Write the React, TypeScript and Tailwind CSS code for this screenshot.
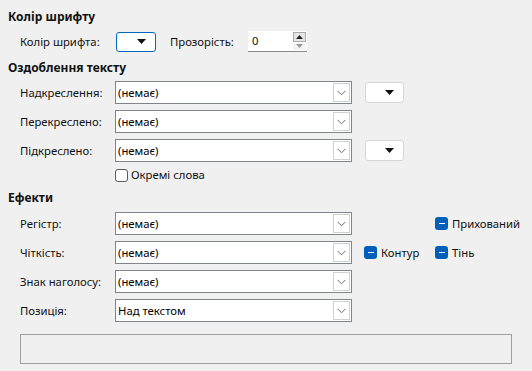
import React from "react"

const Chevron = () => (
  <svg width="9" height="6" viewBox="0 0 9 6" fill="none">
    <path d="M0.5 0.8 L4.5 4.8 L8.5 0.8" stroke="#6b6b6b" strokeWidth="1" />
  </svg>
)

const Tri = () => (
  <svg width="9" height="5" viewBox="0 0 9 5">
    <path d="M0 0 H9 L4.5 5 Z" fill="#111" />
  </svg>
)

const Combo = ({ value }: { value: string }) => (
  <div className="flex h-[23px] w-[237px] shrink-0 items-stretch border border-[#80848b] bg-white">
    <div className="flex flex-1 items-center pl-[2px] text-black">{value}</div>
    <div className="my-[1px] mr-[1px] flex w-[17px] items-center justify-center border border-[#d0d0d0] bg-white">
      <Chevron />
    </div>
  </div>
)

const ColorBtn = ({ active = false }: { active?: boolean }) => (
  <div
    className={
      active
        ? "flex h-[20px] w-[40px] shrink-0 items-center justify-end rounded-[3px] border border-[#0067c0] bg-white pr-[9px]"
        : "flex h-[21px] w-[39px] shrink-0 items-center justify-end rounded-[3px] border border-[#d6d6d6] bg-white pr-[9px]"
    }
  >
    <Tri />
  </div>
)

const Minus = () => (
  <div className="flex h-[13px] w-[13px] shrink-0 items-center justify-center rounded-[3px] bg-[#005fb8]">
    <div className="h-[1.5px] w-[6px] bg-white" />
  </div>
)

const Check = ({ label }: { label: string }) => (
  <div className="flex shrink-0 items-center gap-[4px] whitespace-nowrap">
    <Minus />
    <span>{label}</span>
  </div>
)

const Row = ({ label, children }: { label: string; children: React.ReactNode }) => (
  <div className="flex items-center">
    <div className="w-[107px] shrink-0 whitespace-nowrap pl-[12px]">{label}</div>
    {children}
  </div>
)

export default function App() {
  return (
    <div
      className="h-[371px] w-[532px] overflow-hidden bg-[#f0f0f0] pl-[8px] text-[11.3px] leading-4 text-[#111]"
      style={{ fontFamily: '"Noto Sans", "Open Sans", sans-serif' }}
    >
      <div className="pt-[9px] text-[12px] font-bold">Колір шрифту</div>

      <div className="mt-[6px] flex h-[21px] items-center pl-[12px]">
        <span className="w-[96px] shrink-0 whitespace-nowrap">Колір шрифта:</span>
        <ColorBtn active />
        <span className="ml-[14px] w-[78px] shrink-0 whitespace-nowrap">Прозорість:</span>
        <div className="flex h-[21px] shrink-0 items-stretch">
          <div className="flex w-[44px] items-center border-b border-[#8a8a8a] bg-white pl-[4px]">0</div>
          <div className="flex w-[15px] flex-col border-b border-[#8a8a8a] bg-white">
            <div className="m-[1px] flex flex-1 items-center justify-center border border-[#aaa] bg-[#e6e6e6]">
              <svg width="7" height="4" viewBox="0 0 7 4"><path d="M0 4 H7 L3.5 0 Z" fill="#222" /></svg>
            </div>
            <div className="mx-[1px] mb-[1px] flex flex-1 items-center justify-center bg-[#f3f3f3]">
              <svg width="7" height="4" viewBox="0 0 7 4"><path d="M0 0 H7 L3.5 4 Z" fill="#999" /></svg>
            </div>
          </div>
        </div>
      </div>

      <div className="mt-[8px] text-[12px] font-bold">Оздоблення тексту</div>

      <div className="mt-[5px] flex flex-col gap-[6px]">
        <Row label="Надкреслення:">
          <Combo value="(немає)" />
          <div className="ml-[13px]">
            <ColorBtn />
          </div>
        </Row>
        <Row label="Перекреслено:">
          <Combo value="(немає)" />
        </Row>
        <Row label="Підкреслено:">
          <Combo value="(немає)" />
          <div className="ml-[13px]">
            <ColorBtn />
          </div>
        </Row>
      </div>

      <div className="mt-[5px] flex h-4 items-center gap-[3px] pl-[107px]">
        <div className="h-[13px] w-[13px] rounded-[3px] border border-[#5a5a5a] bg-white" />
        <span>Окремі слова</span>
      </div>

      <div className="mt-[7px] text-[12px] font-bold">Ефекти</div>

      <div className="mt-[6px] flex flex-col gap-[6px]">
        <Row label="Регістр:">
          <Combo value="(немає)" />
          <div className="ml-[12px] w-[71px] shrink-0" />
          <Check label="Прихований" />
        </Row>
        <Row label="Чіткість:">
          <Combo value="(немає)" />
          <div className="ml-[12px] w-[71px] shrink-0">
            <Check label="Контур" />
          </div>
          <Check label="Тінь" />
        </Row>
        <Row label="Знак наголосу:">
          <Combo value="(немає)" />
        </Row>
        <Row label="Позиція:">
          <Combo value="Над текстом" />
        </Row>
      </div>

      <div className="ml-[12px] mt-[12px] h-[30px] w-[492px] border border-[#a0a0a0]" />
    </div>
  )
}
